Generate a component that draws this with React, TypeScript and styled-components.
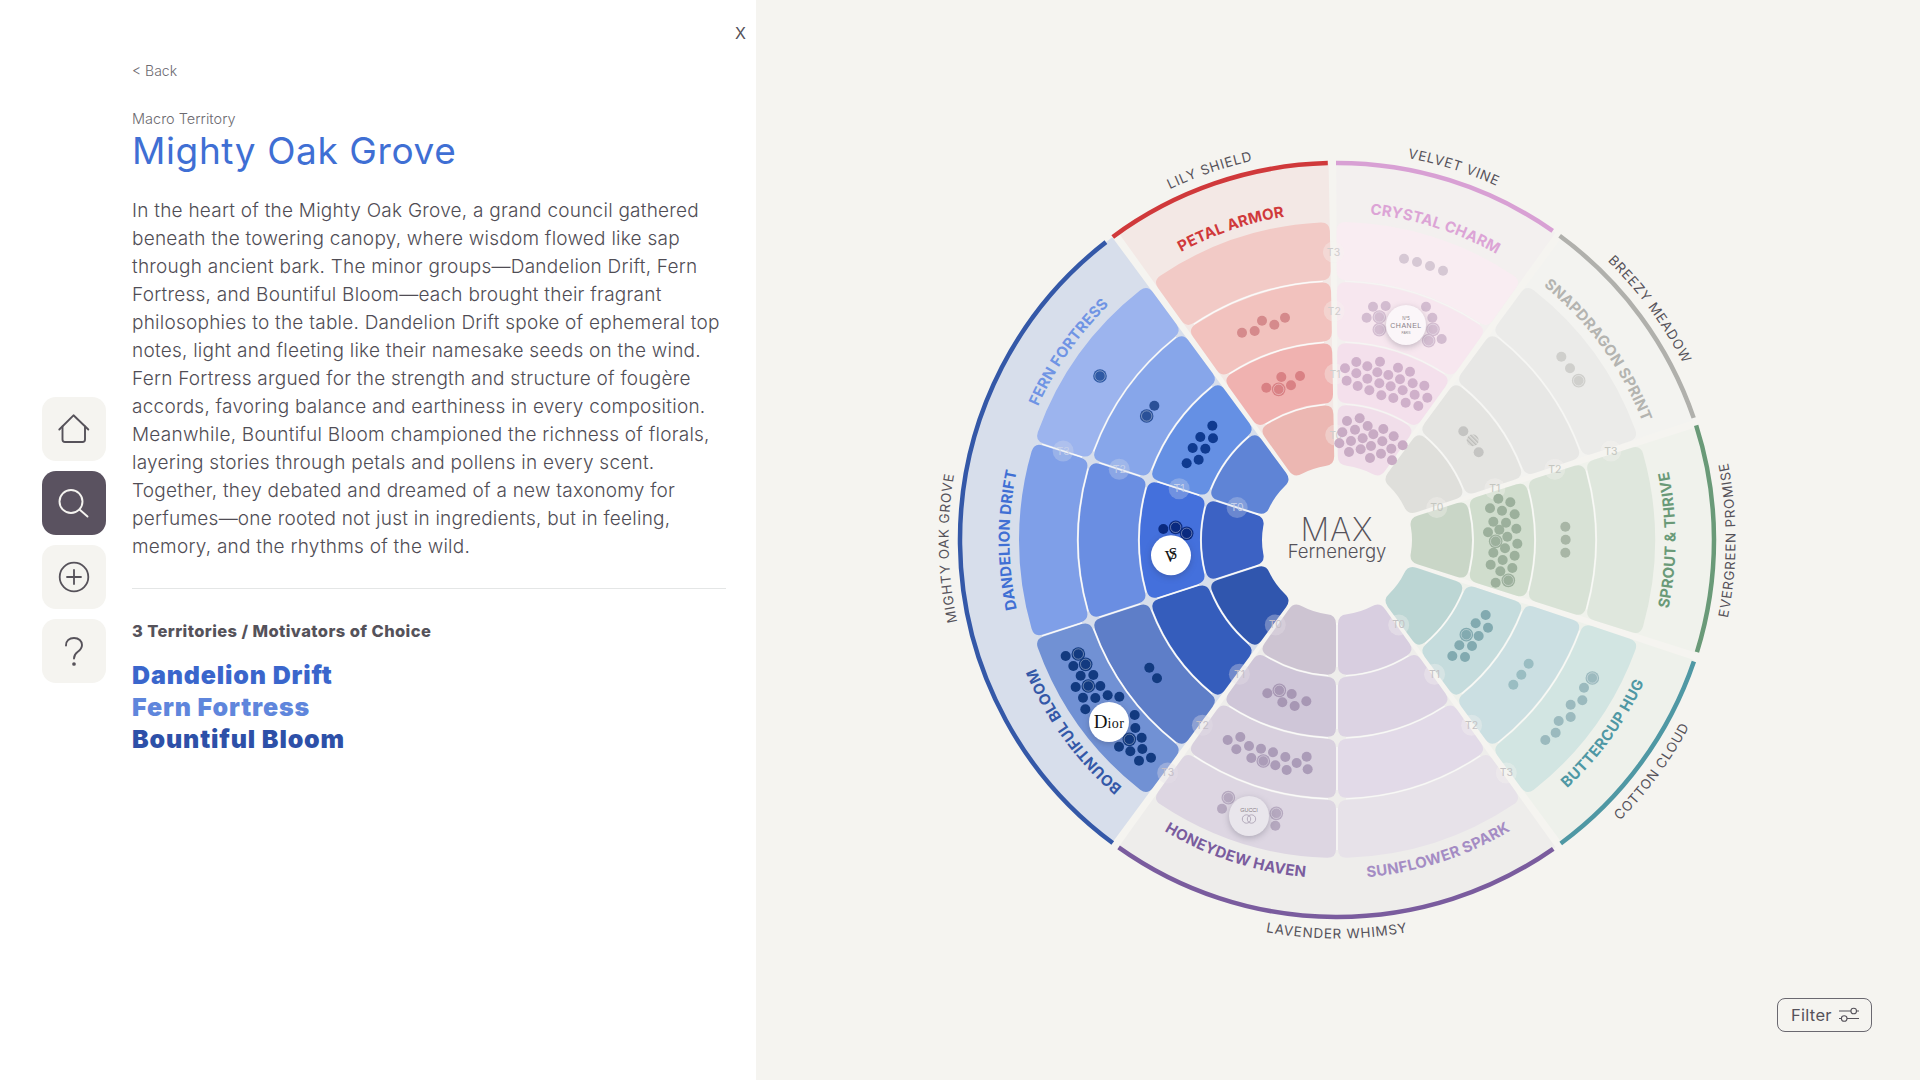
import React from 'react'
import styled, { createGlobalStyle } from 'styled-components'

const GlobalStyle = createGlobalStyle`
  html, body { margin: 0; padding: 0; background: #f5f4f0; }
  * { box-sizing: border-box; }
`

const Page = styled.div`
  display: flex;
  width: 1920px;
  height: 1080px;
  overflow: hidden;
  font-family: Inter, "Liberation Sans", sans-serif;
`
const LeftPanel = styled.aside`
  position: relative;
  display: flex;
  width: 756px;
  background: #fff;
`
const Rail = styled.nav`
  display: flex;
  flex-direction: column;
  justify-content: center;
  gap: 10px;
  width: 132px;
  padding-left: 42px;
`
const RailButton = styled.button<{ $active?: boolean }>`
  display: flex;
  width: 64px;
  height: 64px;
  padding: 0;
  border: 0;
  border-radius: 14px;
  background: ${(p) => (p.$active ? '#5a5260' : '#f5f4f0')};
  color: ${(p) => (p.$active ? '#f5f4f0' : '#56525a')};
`
const Content = styled.div`
  width: 594px;
  padding-top: 61px;
`
const CloseButton = styled.span`
  position: absolute;
  top: 23px;
  right: 10px;
  font-size: 16px;
  line-height: 20px;
  color: #55525a;
`
const BackLink = styled.div`
  font-size: 14px;
  line-height: 20px;
  font-weight: 300;
  color: #6c6a70;
`
const Eyebrow = styled.div`
  margin-top: 28px;
  font-size: 14.5px;
  line-height: 20px;
  font-weight: 300;
  color: #6c6a70;
`
const Title = styled.h1`
  margin: 0;
  font-size: 37px;
  line-height: 44px;
  font-weight: 400;
  letter-spacing: 0.6px;
  color: #3f6fd4;
`
const Body = styled.p`
  margin: 24px 0 0;
  font-size: 19px;
  line-height: 28px;
  font-weight: 300;
  letter-spacing: 0.24px;
  color: #504d55;
`
const BodyLine = styled.span`
  display: block;
  white-space: nowrap;
`
const Divider = styled.hr`
  margin: 27px 0 0;
  border: 0;
  border-top: 1px solid #e4e6e6;
`
const ListHeading = styled.h2`
  margin: 31px 0 17px;
  font-size: 16.5px;
  line-height: 22px;
  font-weight: 800;
  letter-spacing: 0.4px;
  color: #55525a;
`
const TerritoryLink = styled.div<{ $color: string }>`
  font-size: 25px;
  line-height: 32px;
  font-weight: 900;
  letter-spacing: 0.85px;
  color: ${(p) => p.$color};
`
const RightPanel = styled.main`
  position: relative;
  flex: 1;
  display: flex;
  align-items: center;
  justify-content: center;
  padding-right: 2px;
  background: #f5f4f0;
`
const Wheel = styled.svg`
  display: block;
  width: 840px;
  height: 840px;
  flex: none;
`
const OuterLabel = styled.text`
  font-size: 13.5px;
  letter-spacing: 0.8px;
  fill: #55525a;
`
const SectorLabel = styled.text`
  font-size: 15px;
  font-weight: 700;
  letter-spacing: 0.25px;
`
const TierText = styled.text`
  font-size: 10.5px;
  text-anchor: middle;
  dominant-baseline: central;
`
const CenterTitle = styled.text`
  font-size: 32px;
  font-weight: 200;
  letter-spacing: 1px;
  fill: #55525a;
  text-anchor: middle;
`
const CenterSub = styled.text`
  font-size: 18.5px;
  font-weight: 300;
  fill: #55525a;
  text-anchor: middle;
`
const LogoText = styled.text`
  font-family: "Liberation Serif", serif;
  text-anchor: middle;
  fill: #111;
`
const LogoSans = styled.text`
  font-family: "Liberation Sans", sans-serif;
  text-anchor: middle;
  fill: #8a7f88;
`
const LogoBadge = styled.circle`
  filter: drop-shadow(0 2px 3px rgba(40, 40, 60, 0.25));
`
const FilterButton = styled.button`
  position: absolute;
  left: 1021px;
  top: 998px;
  display: flex;
  align-items: center;
  gap: 6px;
  width: 95px;
  height: 34px;
  padding: 0 0 0 13px;
  border: 1px solid #6a6870;
  border-radius: 8px;
  background: transparent;
  font-family: inherit;
  font-size: 16.5px;
  letter-spacing: 0.3px;
  color: #55525a;
`

// ---- wheel geometry

const rad = (d: number) => (d * Math.PI) / 180
const deg = (r: number) => (r * 180) / Math.PI
const pt = (r: number, a: number) => `${(r * Math.sin(rad(a))).toFixed(2)} ${(-r * Math.cos(rad(a))).toFixed(2)}`

type Edge = { a: number; wide: boolean }

const inset = (e: Edge, r: number) => (e.wide ? 0.4 + deg(1.2 / r) : deg(1 / r))

const cellPath = (r0: number, r1: number, l: Edge, h: Edge, cr: number) => {
  const L = (r: number) => l.a + inset(l, r)
  const H = (r: number) => h.a - inset(h, r)
  const c1 = deg(cr / r1)
  const c0 = deg(cr / r0)
  return [
    `M${pt(r1, L(r1) + c1)}`,
    `A${r1} ${r1} 0 0 1 ${pt(r1, H(r1) - c1)}`,
    `Q${pt(r1, H(r1))} ${pt(r1 - cr, H(r1 - cr))}`,
    `L${pt(r0 + cr, H(r0 + cr))}`,
    `Q${pt(r0, H(r0))} ${pt(r0, H(r0) - c0)}`,
    `A${r0} ${r0} 0 0 0 ${pt(r0, L(r0) + c0)}`,
    `Q${pt(r0, L(r0))} ${pt(r0 + cr, L(r0 + cr))}`,
    `L${pt(r1 - cr, L(r1 - cr))}`,
    `Q${pt(r1, L(r1))} ${pt(r1, L(r1) + c1)}`,
    'Z',
  ].join(' ')
}

const arc = (r: number, a0: number, a1: number) => {
  const large = Math.abs(a1 - a0) > 180 ? 1 : 0
  return `M${pt(r, a0)} A${r} ${r} 0 ${large} ${a1 > a0 ? 1 : 0} ${pt(r, a1)}`
}

const rings: [number, number][] = [
  [75, 135],
  [137, 197],
  [199, 258],
  [260, 318],
]

// colours run T0 -> T3, line is how visible the ring lines are on that sector
const sectors = [
  { lo: { a: -0.7, wide: true }, hi: { a: 36, wide: true }, line: 0.3, cells: ['#f1deea', '#f4e0ec', '#f7e7ef', '#f9edf2'] },
  { lo: { a: 36, wide: true }, hi: { a: 72, wide: true }, line: 0.3, cells: ['#dfdfdb', '#e4e4e1', '#e7e7e5', '#ebebe9'] },
  { lo: { a: 72, wide: true }, hi: { a: 108, wide: true }, line: 0.55, cells: ['#c9d6c7', '#d0ddcd', '#d8e2d6', '#dfe7dd'] },
  { lo: { a: 108, wide: true }, hi: { a: 144, wide: true }, line: 0.6, cells: ['#bcd6d4', '#c5dcdd', '#cbdfe2', '#d2e5e2'] },
  { lo: { a: 144, wide: true }, hi: { a: 180, wide: false }, line: 0.6, cells: ['#d8cee0', '#dcd3e3', '#e2dae8', '#e7e2e9'] },
  { lo: { a: 180, wide: false }, hi: { a: 216, wide: true }, line: 0.75, cells: ['#cdc4d2', '#cfc6d8', '#d8d0de', '#ddd6e2'] },
  { lo: { a: 216, wide: true }, hi: { a: 252, wide: false }, line: 0.9, cells: ['#3056ae', '#355dbc', '#5e7ec8', '#7191d4'] },
  { lo: { a: 252, wide: false }, hi: { a: 288, wide: false }, line: 0.9, cells: ['#3c62c4', '#4470dc', '#6a8ee2', '#7f9fe8'] },
  { lo: { a: 288, wide: false }, hi: { a: 324, wide: true }, line: 0.9, cells: ['#5f84d6', '#6590e4', '#87a6ea', '#9cb4ee'] },
  { lo: { a: 324, wide: true }, hi: { a: 359.3, wide: true }, line: 0.8, cells: ['#ecb7b2', '#f0b2b0', '#f2c2be', '#f2cac6'] },
]

const macros = [
  { lo: -0.7, hi: 36, bg: '#f3f0ef', stroke: '#d8a0d4', from: -0.15, to: 34.9 },
  { lo: 36, hi: 72, bg: '#f3f3f0', stroke: '#b0b0ac', from: 36.2, to: 71.1 },
  { lo: 72, hi: 108, bg: '#f0f2ec', stroke: '#6a9a78', from: 72.3, to: 107.3 },
  { lo: 108, hi: 144, bg: '#eef1eb', stroke: '#4f98a4', from: 108.8, to: 143.6 },
  { lo: 144, hi: 216, bg: '#eeedeb', stroke: '#7a5c9e', from: 145, to: 215.4 },
  { lo: 216, hi: 324, bg: '#d7deeb', stroke: '#3458a8', from: 216.5, to: 322.2 },
  { lo: 324, hi: 359.3, bg: '#f3e8e5', stroke: '#d0393b', from: 323.5, to: 358.6 },
]

const outerLabels = [
  { text: 'LILY SHIELD', a: 341, cw: true },
  { text: 'VELVET VINE', a: 17.4, cw: true },
  { text: 'BREEZY MEADOW', a: 53.6, cw: true },
  { text: 'EVERGREEN PROMISE', a: 90, cw: false },
  { text: 'COTTON CLOUD', a: 126.3, cw: false },
  { text: 'LAVENDER WHIMSY', a: 180, cw: false },
  { text: 'MIGHTY OAK GROVE', a: 268.8, cw: true },
]

const sectorLabels = [
  { text: 'PETAL ARMOR', a: 341.2, cw: true, color: '#d0393b' },
  { text: 'CRYSTAL CHARM', a: 17.5, cw: true, color: '#dca4d6' },
  { text: 'SNAPDRAGON SPRINT', a: 54, cw: true, color: '#b4b4b0' },
  { text: 'SPROUT & THRIVE', a: 90, cw: false, color: '#6a9a78' },
  { text: 'BUTTERCUP HUG', a: 126, cw: false, color: '#4f98a4' },
  { text: 'SUNFLOWER SPARK', a: 162, cw: false, color: '#a48cc4' },
  { text: 'HONEYDEW HAVEN', a: 198, cw: false, color: '#7a5c9e' },
  { text: 'BOUNTIFUL BLOOM', a: 234, cw: true, color: '#3458a8' },
  { text: 'DANDELION DRIFT', a: 270, cw: true, color: '#3f6fd4' },
  { text: 'FERN FORTRESS', a: 305, cw: true, color: '#6f94e4' },
]

const tierRadii = [105, 166, 229, 288]
const tierLines = [
  { a: -0.7, fill: '#f5f4f0', text: '#cfcdcc', alpha: 0.35 },
  { a: 72, fill: '#f5f4f0', text: '#c4c6c0', alpha: 0.35 },
  { a: 144, fill: '#f5f4f0', text: '#c4c2c4', alpha: 0.35 },
  { a: 216, fill: '#e4e0e8', text: '#c4bfc8', alpha: 0.35 },
  { a: 288, fill: '#d7deeb', text: '#c6d1ea', alpha: 0.3 },
]

// dot positions read off the reference, in page pixels
type DotGroup = { ox: number; oy: number; color: string; dots: number[][]; ringed?: number[][] }
const O = { tl: [930, 130], tr: [1330, 130], bl: [930, 520], br: [1330, 520] }

const dotGroups: DotGroup[] = [
  { ox: O.tl[0], oy: O.tl[1], color: '#2f5aa5', dots: [], ringed: [[510, 738]] },
  { ox: O.tl[0], oy: O.tl[1], color: '#2a5098', dots: [[673, 827]], ringed: [[650, 858]] },
  { ox: O.tl[0], oy: O.tl[1], color: '#0f3a90', dots: [[847, 887], [811, 921], [849, 925], [788, 954], [826, 956], [770, 1000], [806, 989]] },
  { ox: O.bl[0], oy: O.bl[1], color: '#0a2a80', dots: [[700, 27]], ringed: [[737, 22], [770, 40]] },
  {
    ox: O.bl[0], oy: O.bl[1], color: '#123a80',
    dots: [[407, 408], [430, 438], [452, 467], [490, 465], [437, 501], [511, 498], [459, 533], [496, 534], [533, 526], [568, 530], [466, 568], [614, 585], [616, 624], [635, 653], [567, 680], [601, 694], [637, 687], [627, 722], [663, 713]],
    ringed: [[445, 402], [467, 433], [475, 498], [598, 658]],
  },
  { ox: O.bl[0], oy: O.bl[1], color: '#123a80', dots: [[658, 443], [681, 475]] },
  { ox: O.bl[0], oy: O.bl[1], color: '#a797b4', dots: [[1012, 520], [1085, 522], [1057, 547], [1094, 558], [1129, 544]], ringed: [[1048, 511]] },
  { ox: O.bl[0], oy: O.bl[1], color: '#ab9cb8', dots: [[893, 660], [931, 651], [919, 688], [957, 678], [993, 686], [964, 714], [1029, 697], [1036, 736], [1066, 711], [1070, 750], [1100, 729], [1130, 710], [1133, 748]], ringed: [[1000, 723]] },
  { ox: O.bl[0], oy: O.bl[1], color: '#b5a8bf', dots: [[876, 866], [1036, 917]], ringed: [[895, 833], [1039, 880]] },
  { ox: O.tl[0], oy: O.tl[1], color: '#d58a8c', dots: [[936, 608], [974, 603], [996, 572], [1033, 584], [1065, 563]] },
  { ox: O.tl[0], oy: O.tl[1], color: '#d98184', dots: [[1054, 741], [1009, 773], [1083, 766], [1110, 738]], ringed: [[1046, 778]] },
  { ox: O.tr[0], oy: O.tr[1], color: '#d6c8d4', dots: [[222, 386], [261, 396], [300, 408], [339, 422]] },
  { ox: O.tr[0], oy: O.tr[1], color: '#d3bcd0', dots: [[129, 530], [167, 528], [110, 563], [288, 530], [307, 563], [335, 627]], ringed: [[148, 561], [148, 599], [309, 598], [296, 632]] },
  {
    ox: O.tr[0], oy: O.tr[1], color: '#cfb0ca',
    dots: [[79, 696], [150, 695], [45, 715], [112, 709], [204, 713], [240, 725], [79, 730], [142, 727], [175, 735], [50, 752], [112, 746], [210, 748], [248, 760], [83, 768], [148, 760], [182, 769], [283, 767], [118, 781], [218, 781], [254, 794], [292, 803], [154, 796], [190, 804], [227, 818], [265, 828]],
  },
  {
    ox: O.tr[0], oy: O.tr[1], color: '#c8abc4',
    dots: [[51, 873], [89, 865], [113, 888], [160, 897], [37, 907], [75, 899], [130, 913], [191, 919], [63, 933], [98, 925], [157, 934], [28, 940], [123, 948], [218, 946], [184, 956], [57, 966], [92, 958], [153, 971], [120, 984], [186, 991]],
  },
  { ox: O.tr[0], oy: O.tr[1], color: '#cfcfcc', dots: [[694, 680], [720, 715]], ringed: [[746, 752]] },
  { ox: O.tr[0], oy: O.tr[1], color: '#c4c4c2', dots: [[400, 904], [446, 967]] },
  { ox: O.tr[0], oy: O.tr[1], color: '#9cb09c', dots: [[505, 1106], [541, 1117], [480, 1135], [516, 1142], [554, 1153]] },
  {
    ox: O.br[0], oy: O.br[1], color: '#9cb09c',
    dots: [[490, 5], [528, 8], [559, 26], [474, 37], [508, 29], [532, 50], [562, 71], [525, 85], [490, 98], [554, 107], [518, 120], [482, 134], [547, 144], [511, 154], [497, 188]],
    ringed: [[497, 64], [535, 181]],
  },
  { ox: O.br[0], oy: O.br[1], color: '#a8b6a6', dots: [[706, 20], [707, 59], [706, 98]] },
  { ox: O.br[0], oy: O.br[1], color: '#82aab0', dots: [[467, 285], [437, 310], [474, 323], [446, 348], [388, 376], [426, 378], [367, 408], [405, 411]], ringed: [[409, 344]] },
  { ox: O.br[0], oy: O.br[1], color: '#9abdc2', dots: [[596, 431], [574, 464], [550, 494]] },
  { ox: O.br[0], oy: O.br[1], color: '#9bbabe', dots: [[762, 503], [757, 541], [722, 554], [722, 591], [686, 603], [677, 638], [646, 660]], ringed: [[787, 474]] },
]

const toWheel = (g: DotGroup, p: number[]) => [g.ox + p[0] / 3 - 1337, g.oy + p[1] / 3 - 540]

const bodyLines = [
  'In the heart of the Mighty Oak Grove, a grand council gathered',
  'beneath the towering canopy, where wisdom flowed like sap',
  'through ancient bark. The minor groups—Dandelion Drift, Fern',
  'Fortress, and Bountiful Bloom—each brought their fragrant',
  'philosophies to the table. Dandelion Drift spoke of ephemeral top',
  'notes, light and fleeting like their namesake seeds on the wind.',
  'Fern Fortress argued for the strength and structure of fougère',
  'accords, favoring balance and earthiness in every composition.',
  'Meanwhile, Bountiful Bloom championed the richness of florals,',
  'layering stories through petals and pollens in every scent.',
  'Together, they debated and dreamed of a new taxonomy for',
  'perfumes—one rooted not just in ingredients, but in feeling,',
  'memory, and the rhythms of the wild.',
]

const territories = [
  { name: 'Dandelion Drift', color: '#3a66cc' },
  { name: 'Fern Fortress', color: '#5f86dc' },
  { name: 'Bountiful Bloom', color: '#2d50a8' },
]

const CurvedLabel = ({ id, r, a, cw, span, children }: { id: string; r: number; a: number; cw: boolean; span: number; children: React.ReactNode }) => (
  <>
    <path id={id} d={cw ? arc(r, a - span, a + span) : arc(r, a + span, a - span)} fill="none" />
    <textPath href={`#${id}`} startOffset="50%" textAnchor="middle">
      {children}
    </textPath>
  </>
)

const WheelChart = () => (
  <Wheel viewBox="-420 -420 840 840">
    <defs>
      <pattern id="hatch" width="3" height="3" patternUnits="userSpaceOnUse" patternTransform="rotate(-45)">
        <rect width="3" height="3" fill="#dcdcd9" />
        <rect width="1.4" height="3" fill="#bdbdba" />
      </pattern>
    </defs>

    {macros.map((m) => (
      <path
        key={m.lo}
        d={cellPath(85, 377, { a: m.lo, wide: true }, { a: m.hi, wide: true }, 0.5)}
        fill={m.bg}
      />
    ))}

    {sectors.map((s) =>
      s.cells.map((c, i) => (
        <path key={`${s.lo.a}-${i}`} d={cellPath(rings[i][0], rings[i][1], s.lo, s.hi, 9)} fill={c} />
      )),
    )}

    {sectors.map((s) =>
      [136, 198, 259].map((r) => {
        const pad = deg(8 / r)
        return (
          <path
            key={`${s.lo.a}-${r}`}
            d={arc(r, s.lo.a + inset(s.lo, r) + pad, s.hi.a - inset(s.hi, r) - pad)}
            fill="none"
            stroke="#fff"
            strokeOpacity={s.line}
            strokeWidth="1.2"
          />
        )
      }),
    )}

    {[
      { a: 180, o: 0.7 },
      { a: 252, o: 0.9 },
      { a: 288, o: 0.9 },
    ].map(({ a, o }) =>
      rings.map(([r0, r1]) => (
        <path
          key={`${a}-${r0}`}
          d={`M${pt(r0 + 8, a)} L${pt(r1 - 8, a)}`}
          stroke="#fff"
          strokeOpacity={o}
          strokeWidth="1.2"
        />
      )),
    )}

    {macros.map((m) => (
      <path key={m.from} d={arc(377, m.from, m.to)} fill="none" stroke={m.stroke} strokeWidth="4.5" />
    ))}

    {tierLines.map((l) =>
      tierRadii.map((r, i) => {
        const x = r * Math.sin(rad(l.a))
        const y = -r * Math.cos(rad(l.a))
        return (
          <g key={`${l.a}-${r}`}>
            <circle cx={x} cy={y} r="10.5" fill={l.fill} fillOpacity={l.alpha} />
            <TierText x={x} y={y} fill={l.text}>{`T${i}`}</TierText>
          </g>
        )
      }),
    )}

    {dotGroups.map((g, gi) => (
      <g key={gi}>
        {g.dots.map((p, i) => {
          const [x, y] = toWheel(g, p)
          return <circle key={i} cx={x} cy={y} r="5" fill={g.color} />
        })}
        {(g.ringed || []).map((p, i) => {
          const [x, y] = toWheel(g, p)
          return (
            <g key={i}>
              <circle cx={x} cy={y} r="6.8" fill={g.color} />
              <circle cx={x} cy={y} r="5.2" fill={g.color} stroke="#fff" strokeOpacity="0.45" strokeWidth="0.8" />
            </g>
          )
        })}
      </g>
    ))}
    <circle cx={1330 + 428 / 3 - 1337} cy={130 + 931 / 3 - 540} r="6" fill="url(#hatch)" />

    {outerLabels.map((l, i) => (
      <OuterLabel key={l.text}>
        <CurvedLabel id={`outer-${i}`} r={l.cw ? 388.5 : 398.5} a={l.a} cw={l.cw} span={34}>
          {l.text}
        </CurvedLabel>
      </OuterLabel>
    ))}

    {sectorLabels.map((l, i) => (
      <SectorLabel key={l.text} fill={l.color}>
        <CurvedLabel id={`sector-${i}`} r={l.cw ? 327.5 : 338.5} a={l.a} cw={l.cw} span={34}>
          {l.text}
        </CurvedLabel>
      </SectorLabel>
    ))}

    <CenterTitle x="0" y="1">MAX</CenterTitle>
    <CenterSub x="0" y="18">Fernenergy</CenterSub>

    <g transform={`translate(${930 + 723 / 3 - 1337} ${520 + 106 / 3 - 540})`}>
      <LogoBadge r="20" fill="#fff" />
      <LogoText x="0" y="4" fontSize="16">
        <tspan>S</tspan>
        <tspan dx="-13" dy="3">V</tspan>
      </LogoText>
    </g>
    <g transform={`translate(${930 + 537 / 3 - 1337} ${520 + 606 / 3 - 540})`}>
      <LogoBadge r="20" fill="#fff" />
      <LogoText x="0" y="6">
        <tspan fontSize="19">D</tspan>
        <tspan fontSize="14" letterSpacing="0.4">ior</tspan>
      </LogoText>
    </g>
    <g transform={`translate(${1330 + 228 / 3 - 1337} ${130 + 585 / 3 - 540})`}>
      <LogoBadge r="20" fill="#fbf6f9" />
      <LogoSans x="0" y="-5.5" fontSize="4.5">N°5</LogoSans>
      <LogoSans x="0" y="3" fontSize="7" letterSpacing="0.5">CHANEL</LogoSans>
      <LogoSans x="0" y="8.5" fontSize="3">PARIS</LogoSans>
    </g>
    <g transform={`translate(${930 + 957 / 3 - 1337} ${520 + 888 / 3 - 540})`}>
      <LogoBadge r="20" fill="#e9e6ec" />
      <LogoSans x="0" y="-4.5" fontSize="5.5" fill="#b3a9ba">GUCCI</LogoSans>
      <circle cx="-2.5" cy="3" r="4.2" fill="none" stroke="#a79db0" strokeWidth="0.8" />
      <circle cx="2.5" cy="3" r="4.2" fill="none" stroke="#a79db0" strokeWidth="0.8" />
    </g>
  </Wheel>
)

const App = () => (
  <Page>
    <GlobalStyle />
    <LeftPanel>
      <CloseButton>X</CloseButton>
      <Rail>
        <RailButton aria-label="Home">
          <svg width="64" height="64" viewBox="0 0 64 64" fill="none" stroke="currentColor" strokeWidth="1.9" strokeLinejoin="round" strokeLinecap="round">
            <path d="M17.3 32.5 31.5 18.3 46.3 32.5" />
            <path d="M20.5 29.5V42.5a2.5 2.5 0 0 0 2.5 2.5H40.5a2.5 2.5 0 0 0 2.5-2.5V29.5" />
          </svg>
        </RailButton>
        <RailButton $active aria-label="Search">
          <svg width="64" height="64" viewBox="0 0 64 64" fill="none" stroke="currentColor" strokeWidth="1.9" strokeLinecap="round">
            <circle cx="29" cy="30.5" r="11.5" />
            <path d="M37.5 38.5 45.5 45.5" />
          </svg>
        </RailButton>
        <RailButton aria-label="Add">
          <svg width="64" height="64" viewBox="0 0 64 64" fill="none" stroke="currentColor" strokeWidth="1.8" strokeLinecap="round">
            <circle cx="32" cy="32" r="14.3" />
            <path d="M32 25V39M25 32H39" />
          </svg>
        </RailButton>
        <RailButton aria-label="Help">
          <svg width="64" height="64" viewBox="0 0 64 64" fill="none" stroke="currentColor" strokeWidth="1.9" strokeLinecap="round">
            <path d="M24 26.5C24 22 27.3 19 32 19 36.8 19 40 22 40 26 40 29.5 37.8 31.3 35.5 33 33.3 34.6 32 36 32 39.5" />
            <circle cx="32" cy="45" r="0.9" fill="currentColor" />
          </svg>
        </RailButton>
      </Rail>
      <Content>
        <BackLink>&lt; Back</BackLink>
        <Eyebrow>Macro Territory</Eyebrow>
        <Title>Mighty Oak Grove</Title>
        <Body>
          {bodyLines.map((line) => (
            <BodyLine key={line}>{line}</BodyLine>
          ))}
        </Body>
        <Divider />
        <ListHeading>3 Territories / Motivators of Choice</ListHeading>
        {territories.map((t) => (
          <TerritoryLink key={t.name} $color={t.color}>
            {t.name}
          </TerritoryLink>
        ))}
      </Content>
    </LeftPanel>
    <RightPanel>
      <WheelChart />
      <FilterButton>
        Filter
        <svg width="22" height="18" viewBox="0 0 22 18" fill="none" stroke="currentColor" strokeWidth="1.1">
          <path d="M1 5H13M18.5 5H21M1 12.5H3.5M9 12.5H21" />
          <circle cx="15.7" cy="5" r="2.8" />
          <circle cx="6.2" cy="12.5" r="2.8" />
        </svg>
      </FilterButton>
    </RightPanel>
  </Page>
)

export default App
